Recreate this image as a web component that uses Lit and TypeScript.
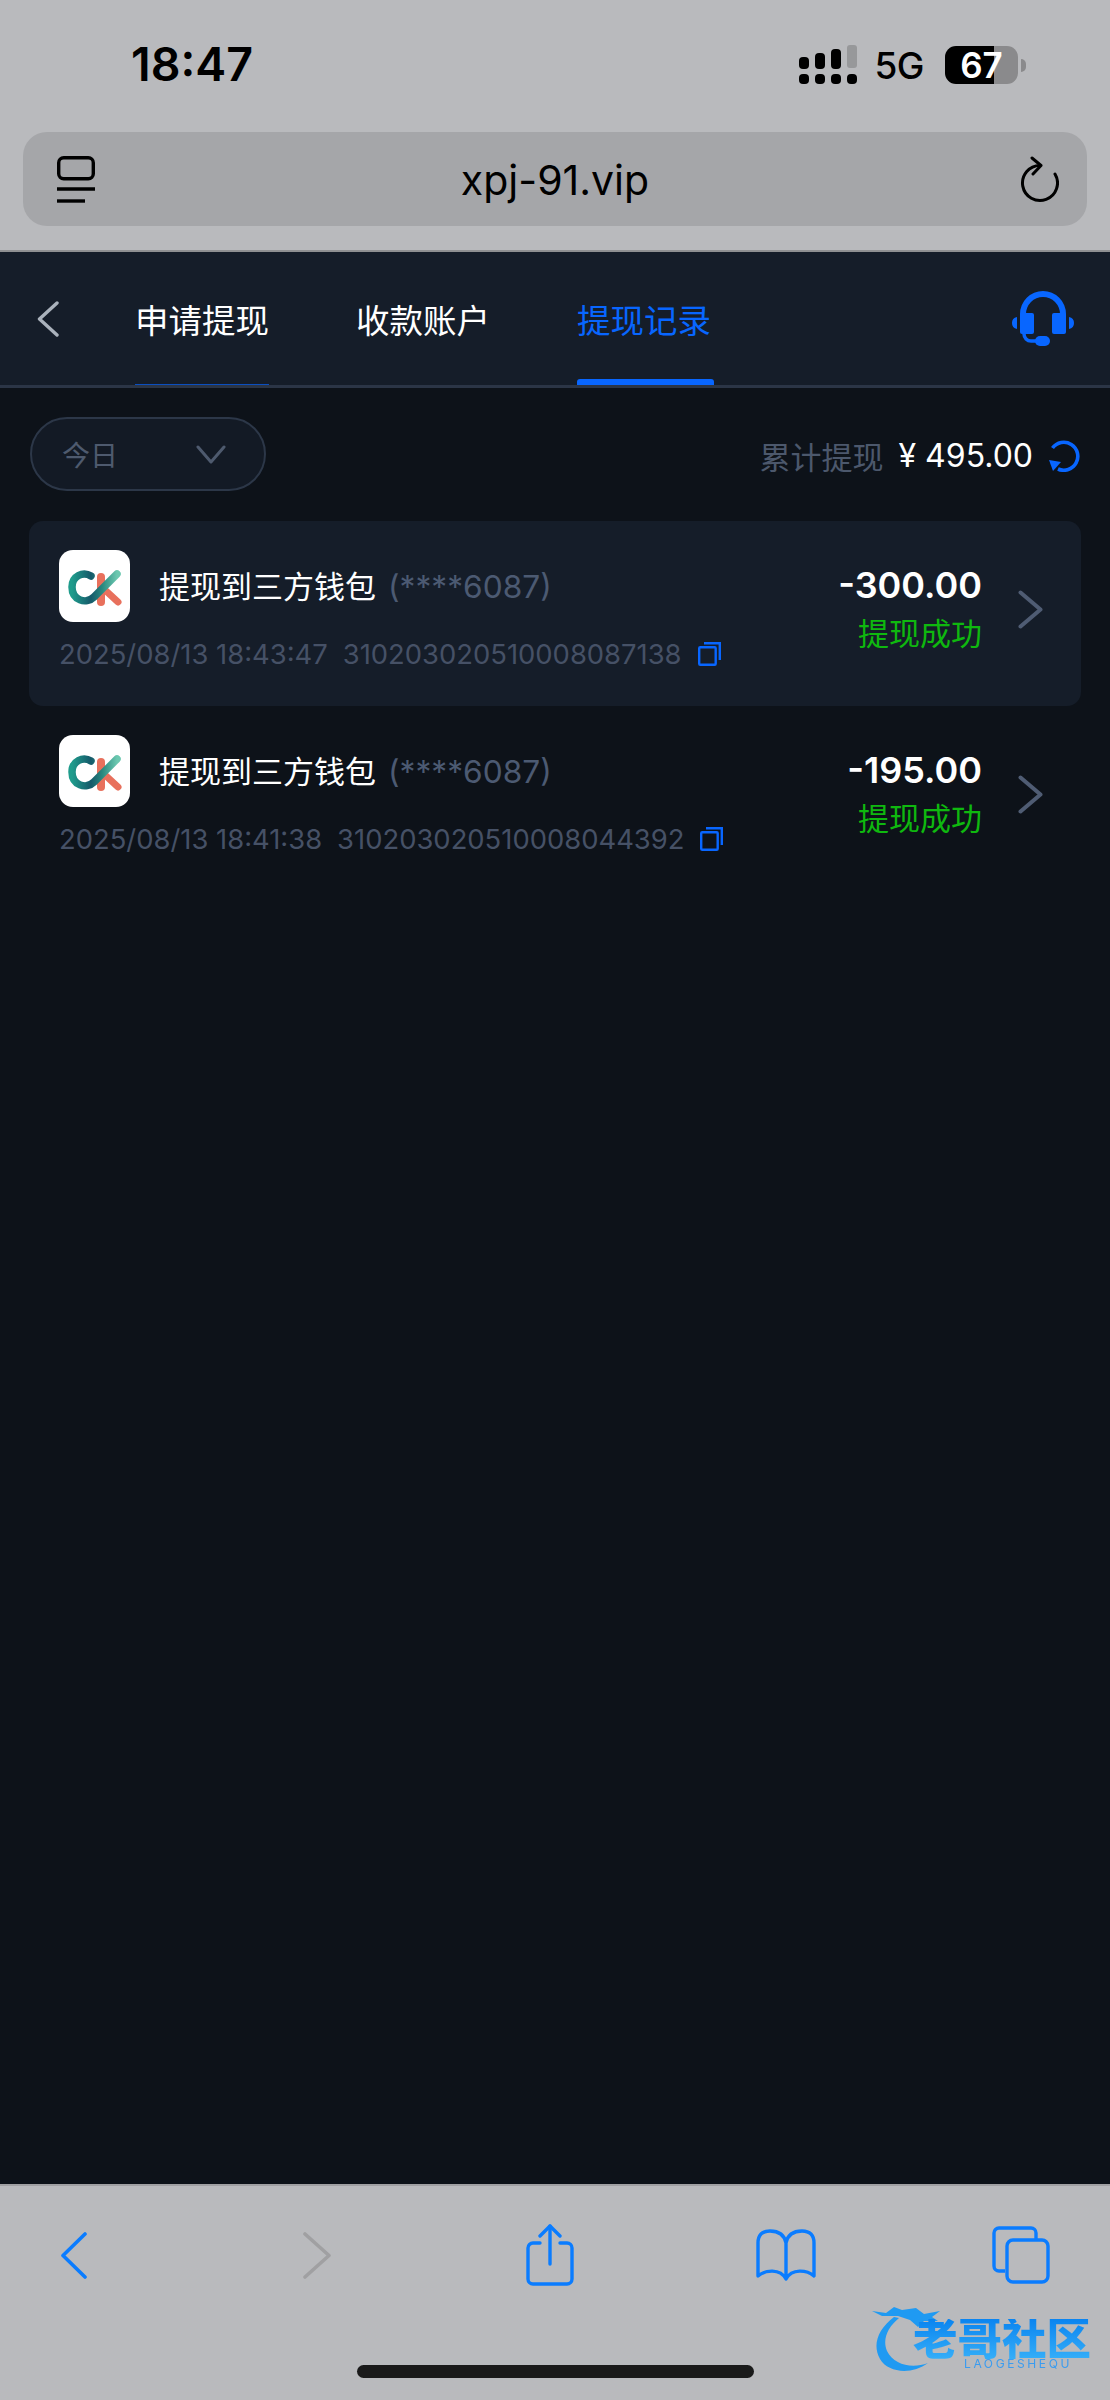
import { LitElement, css, html, svg } from 'lit'
import { customElement } from 'lit/decorators.js'

const records = [
  { time: '2025/08/13 18:43:47', no: '310203020510008087138', amount: '-300.00', active: true },
  { time: '2025/08/13 18:41:38', no: '310203020510008044392', amount: '-195.00', active: false },
]

const walletLogo = svg`
  <svg class="logo-mark" viewBox="0 0 71 72" width="71" height="72">
    <defs>
      <linearGradient id="ck" x1="0" y1="0" x2="1" y2="0">
        <stop offset="0" stop-color="#1f9c8c" />
        <stop offset="0.42" stop-color="#155a6a" />
        <stop offset="0.68" stop-color="#2a8a80" />
        <stop offset="1" stop-color="#6cc8b0" />
      </linearGradient>
    </defs>
    <path d="M42 27V52" stroke="#e8705c" stroke-width="8" stroke-linecap="round" fill="none" />
    <path d="M46 40L59 52" stroke="#e8705c" stroke-width="7" stroke-linecap="round" fill="none" />
    <path d="M32 26C24 21 13 26 13 37C13 50 27 55 35 47L58 24" stroke="url(#ck)" stroke-width="7.5" stroke-linecap="round" fill="none" />
  </svg>
`

@customElement('app-root')
export class AppRoot extends LitElement {
  static styles = css`
    :host {
      display: flex;
      flex-direction: column;
      position: relative;
      height: 2400px;
      overflow: hidden;
      background: #0d1219;
      font-family: Inter, 'Noto Sans CJK SC', sans-serif;
      color: #fff;
    }
    svg { display: block; }

    /* ios chrome */
    .top {
      height: 252px;
      flex: none;
      box-sizing: border-box;
      background: #b9babd;
      color: #000;
      border-bottom: 2px solid #8f9092;
    }
    .status {
      height: 132px;
      display: flex;
      align-items: center;
      padding: 0 84px 0 131px;
      justify-content: space-between;
    }
    .clock {
      font-size: 46.5px;
      font-weight: 600;
      margin-top: -4px;
    }
    .status-right {
      display: flex;
      align-items: center;
      margin-top: -2px;
    }
    .net {
      font-size: 37px;
      font-weight: 500;
      margin: 0 21px 0 17px;
      letter-spacing: -0.5px;
    }
    .battery {
      width: 73px;
      height: 38px;
      border-radius: 11px;
      background: linear-gradient(90deg, #000 0 49px, #8a8a8c 49px);
      display: flex;
      align-items: center;
      justify-content: center;
      color: #fff;
      font-size: 35px;
      font-weight: 600;
      line-height: 38px;
    }
    .nub {
      width: 5px;
      height: 13px;
      margin-left: 3px;
      border-radius: 0 6px 6px 0;
      background: #8a8a8c;
    }
    .url {
      height: 94px;
      margin: 0 23px;
      border-radius: 24px;
      background: #a5a6a9;
      display: flex;
      align-items: center;
      justify-content: space-between;
      padding: 0 28px 0 34px;
    }
    .url span {
      font-size: 41px;
      margin: 2px 4px 0 0;
    }

    /* nav */
    .nav {
      height: 133px;
      flex: none;
      display: flex;
      align-items: stretch;
      background: #151d29;
      border-bottom: 3px solid #2b3546;
      padding-left: 37px;
    }
    .back { align-self: center; margin-right: 76px; }
    .tab {
      position: relative;
      display: flex;
      align-items: center;
      font-size: 33.5px;
      margin-right: 87px;
      color: #fff;
    }
    .tab i {
      position: absolute;
      left: 0;
      right: 0;
      bottom: 0;
      height: 1px;
      background: #0b4fc0;
    }
    .tab.on { color: #0866ff; }
    .tab.on i {
      right: -3px;
      height: 6px;
      border-radius: 3px 3px 0 0;
      background: #0866ff;
    }
    .headset { align-self: center; margin-left: auto; margin-right: 35px; }

    /* filter row */
    .filter {
      display: flex;
      align-items: center;
      justify-content: space-between;
      padding: 29px 30px 30px;
    }
    .pick {
      width: 236px;
      height: 74px;
      box-sizing: border-box;
      border: 2px solid #2c3748;
      border-radius: 37px;
      background: #131a25;
      display: flex;
      align-items: center;
      justify-content: space-between;
      padding: 0 38px 0 30px;
      font-size: 28px;
      color: #4e5a6e;
    }
    .sum {
      display: flex;
      align-items: center;
      font-size: 31px;
      color: #4c586c;
      margin-top: 3px;
    }
    .sum b {
      font-weight: 400;
      color: #fff;
      font-size: 32px;
      margin: 0 15px 0 15px;
    }

    /* records */
    .list { padding: 0 29px; }
    .card {
      height: 185px;
      box-sizing: border-box;
      display: flex;
      padding: 29px 38px 0 30px;
      border-radius: 14px;
    }
    .card.on { background: #151d29; }
    .left { flex: 1; min-width: 0; }
    .head {
      display: flex;
      align-items: center;
      gap: 29px;
      font-size: 31px;
      white-space: nowrap;
    }
    .head .title { padding-bottom: 3px; }
    .head em {
      font-style: normal;
      font-size: 31.7px;
      color: #4c5a72;
      margin-left: 12px;
    }
    .logo {
      width: 71px;
      height: 72px;
      border-radius: 14px;
      background: #fff;
      flex: none;
    }
    .sub {
      display: flex;
      align-items: center;
      margin-top: 15px;
      font-size: 27.4px;
      color: #465166;
      white-space: nowrap;
    }
    .sub .no { margin-left: 15px; margin-right: 16px; }
    .right {
      display: flex;
      flex-direction: column;
      align-items: flex-end;
      margin-right: 36px;
      margin-top: 13px;
    }
    .amount {
      font-size: 36px;
      font-weight: 600;
      line-height: 44px;
    }
    .state {
      font-size: 31px;
      color: #0fb80f;
      line-height: 44px;
      margin-top: 5px;
    }
    .go { margin-top: 40px; }

    /* bottom bar */
    .bottom {
      margin-top: auto;
      height: 216px;
      flex: none;
      box-sizing: border-box;
      background: #b9babd;
      border-top: 2px solid #a0a0a3;
    }
    .tools {
      display: grid;
      grid-template-columns: 243px 233px 236px 235px 60px;
      padding: 37px 0 0 44px;
    }
    .tools > div { width: 60px; height: 64px; display: flex; align-items: center; justify-content: center; }
    .home {
      width: 397px;
      height: 13px;
      border-radius: 7px;
      background: #1a1a1a;
      margin: 78px 0 0 357px;
    }
    .mark {
      position: absolute;
      left: 872px;
      top: 2305px;
      width: 222px;
      height: 70px;
      filter: blur(0.7px);
    }
    .mark .cn {
      position: absolute;
      left: 41px;
      top: 14px;
      font-size: 44.5px;
      font-weight: 900;
      line-height: 40px;
      white-space: nowrap;
      background: linear-gradient(180deg, #0a84f0, #35aef8);
      -webkit-background-clip: text;
      background-clip: text;
      color: transparent;
    }
    .mark .en {
      position: absolute;
      left: 92px;
      top: 52px;
      font-size: 12px;
      line-height: 14px;
      letter-spacing: 2.6px;
      color: #3a9cf0;
      white-space: nowrap;
    }
  `

  private renderRecord(r: (typeof records)[number]) {
    return html`
      <div class="card ${r.active ? 'on' : ''}">
        <div class="left">
          <div class="head">
            <div class="logo">${walletLogo}</div>
            <div class="title">提现到三方钱包<em>(****6087)</em></div>
          </div>
          <div class="sub">
            <span>${r.time}</span>
            <span class="no">${r.no}</span>
            <svg width="23" height="24" viewBox="0 0 23 24" fill="none" stroke="#0866ff" stroke-width="2.4">
              <rect x="1.2" y="5.2" width="16.5" height="17.5" rx="1" />
              <path d="M6 1.2H21.8V18" />
            </svg>
          </div>
        </div>
        <div class="right">
          <div class="amount">${r.amount}</div>
          <div class="state">提现成功</div>
        </div>
        <svg class="go" width="25" height="39" viewBox="0 0 25 39" fill="none" stroke="#4f5c73" stroke-width="4" stroke-linecap="round" stroke-linejoin="round">
          <path d="M2.5 2.5L22.5 19.5L2.5 36.5" />
        </svg>
      </div>
    `
  }

  render() {
    return html`
      <div class="top">
        <div class="status">
          <div class="clock">18:47</div>
          <div class="status-right">
            <svg width="58" height="40" viewBox="0 0 58 40">
              <rect x="0" y="12" width="10" height="12" rx="4" />
              <rect x="16" y="8" width="10" height="16" rx="4" />
              <rect x="32" y="4" width="10" height="20" rx="4" />
              <rect x="48" y="0" width="10" height="23" rx="3" fill="#97989a" />
              <rect x="0" y="29" width="10" height="10" rx="4" />
              <rect x="16" y="29" width="10" height="10" rx="4" />
              <rect x="32" y="29" width="10" height="10" rx="4" />
              <rect x="48" y="29" width="10" height="10" rx="4" />
            </svg>
            <div class="net">5G</div>
            <div class="battery">67</div>
            <div class="nub"></div>
          </div>
        </div>
        <div class="url">
          <svg width="38" height="47" viewBox="0 0 38 47" fill="none" stroke="#000" stroke-width="3.4">
            <rect x="1.7" y="1.7" width="34.6" height="21" rx="5" />
            <path d="M0 33H38" />
            <path d="M0 45H28" />
          </svg>
          <span>xpj-91.vip</span>
          <svg width="40" height="47" viewBox="0 0 40 47" fill="none" stroke="#000" stroke-width="3" stroke-linecap="round" stroke-linejoin="round">
            <path d="M21 9.5A17.5 17.5 0 1 0 36 18" />
            <path d="M13 2L22 9.5L14 18" />
          </svg>
        </div>
      </div>

      <div class="nav">
        <svg class="back" width="22" height="36" viewBox="0 0 22 36" fill="none" stroke="#aab2bc" stroke-width="3.4" stroke-linecap="round" stroke-linejoin="round">
          <path d="M20 2L2.5 18L20 34" />
        </svg>
        <div class="tab">申请提现<i></i></div>
        <div class="tab">收款账户</div>
        <div class="tab on">提现记录<i></i></div>
        <svg class="headset" width="64" height="56" viewBox="0 0 64 56" fill="#0866ff">
          <path d="M1 32a6 6 0 0 1 5-6v12a6 6 0 0 1-5-6z" />
          <path d="M63 32a6 6 0 0 0-5-6v12a6 6 0 0 0 5-6z" />
          <path d="M9 40V23a23 23 0 0 1 46 0v17h-6V23a17 17 0 0 0-34 0v17z" />
          <rect x="9" y="22" width="14" height="21" rx="2" />
          <rect x="41" y="22" width="14" height="21" rx="2" />
          <path d="M13 42v1a7 7 0 0 0 7 7h9" fill="none" stroke="#0866ff" stroke-width="3.5" />
          <rect x="24" y="45" width="15" height="10" rx="5" />
        </svg>
      </div>

      <div class="filter">
        <div class="pick">
          <span>今日</span>
          <svg width="30" height="19" viewBox="0 0 30 19" fill="none" stroke="#4e5a6e" stroke-width="3" stroke-linecap="round" stroke-linejoin="round">
            <path d="M2 2L15 17L28 2" />
          </svg>
        </div>
        <div class="sum">
          <span>累计提现</span>
          <b>¥ 495.00</b>
          <svg width="32" height="32" viewBox="0 0 32 32" fill="none" stroke="#0866ff" stroke-width="3.6">
            <path d="M4.5 8A14 14 0 1 1 10 29" />
            <path d="M1 20L13 22L5 31Z" fill="#0866ff" stroke="none" />
          </svg>
        </div>
      </div>

      <div class="list">${records.map((r) => this.renderRecord(r))}</div>

      <div class="bottom">
        <div class="tools">
          <div>
            <svg width="26" height="47" viewBox="0 0 26 47" fill="none" stroke="#0a7cff" stroke-width="3.6" stroke-linecap="round" stroke-linejoin="round">
              <path d="M24 2L2 23.5L24 45" />
            </svg>
          </div>
          <div>
            <svg width="28" height="47" viewBox="0 0 28 47" fill="none" stroke="#a0a0a2" stroke-width="3.6" stroke-linecap="round" stroke-linejoin="round">
              <path d="M2 2L26 23.5L2 45" />
            </svg>
          </div>
          <div>
            <svg width="48" height="62" viewBox="0 0 48 62" fill="none" stroke="#0a7cff" stroke-width="3.4" stroke-linecap="round" stroke-linejoin="round">
              <path d="M14 19H7a5 5 0 0 0-5 5v31a5 5 0 0 0 5 5h34a5 5 0 0 0 5-5V24a5 5 0 0 0-5-5h-7" />
              <path d="M24 40V2" />
              <path d="M14 12L24 2L34 12" />
            </svg>
          </div>
          <div>
            <svg width="60" height="52" viewBox="0 0 60 52" fill="none" stroke="#0a7cff" stroke-width="3.4" stroke-linecap="round" stroke-linejoin="round">
              <path d="M30 14C28 4 20 2 14 2C6 2 2 6 2 14V47C9 41 24 39 30 50C36 39 51 41 58 47V14C58 6 54 2 46 2C40 2 32 4 30 14V48" />
            </svg>
          </div>
          <div>
            <svg width="58" height="58" viewBox="0 0 58 58" fill="none" stroke="#0a7cff" stroke-width="3.4">
              <path d="M13 45H7a5 5 0 0 1-5-5V7a5 5 0 0 1 5-5h32a5 5 0 0 1 5 5v7" />
              <rect x="15" y="14" width="41" height="42" rx="6" />
            </svg>
          </div>
        </div>
        <div class="home"></div>
      </div>

      <div class="mark">
        <svg width="70" height="70" viewBox="0 0 70 70" fill="#1f9af2">
          <path d="M22 12C6 24 0 40 8 54C16 68 40 70 56 58C40 64 22 60 15 46C10 34 16 22 27 13Z" />
          <path d="M0 6L14 8L22 2L30 5L44 3L52 9L68 6L60 12L66 16L52 16L46 22L38 15L26 11L10 11Z" />
        </svg>
        <div class="cn">老哥社区</div>
        <div class="en">LAOGESHEQU</div>
      </div>
    `
  }
}
